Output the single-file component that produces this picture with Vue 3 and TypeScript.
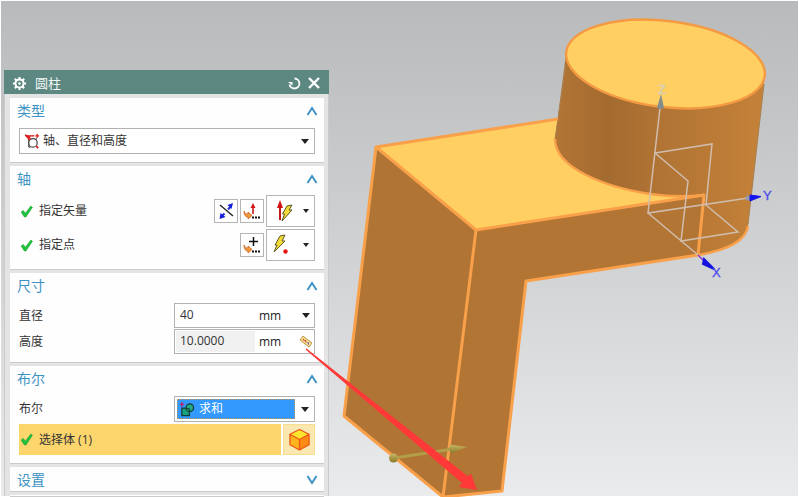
<script setup lang="ts">
import { ref } from 'vue'

const cylinderType = ref('axis')
const diameter = ref('40')
const height = ref('10.0000')
const bool = ref('unite')
</script>

<template>
  <main class="workspace">
    <svg class="scene" viewBox="0 0 799 497" preserveAspectRatio="xMinYMin slice" role="img" aria-label="模型视图">
      <defs>
        <linearGradient id="wall" x1="0" x2="1" y1="0" y2="0">
          <stop offset="0" stop-color="#b27534" />
          <stop offset=".25" stop-color="#a46b30" />
          <stop offset=".45" stop-color="#ae7233" />
          <stop offset="1" stop-color="#c58239" />
        </linearGradient>
        <linearGradient id="gold" x1="0" x2="0" y1="0" y2="1">
          <stop offset="0" stop-color="#c9b965" />
          <stop offset="1" stop-color="#8a7527" />
        </linearGradient>
      </defs>
      <path d="M376 147L476 230L443 497L344 416Z" fill="#b07434" />
      <path d="M476 230L704 195L698 255L526 281L502 491L443 498Z" fill="#b27534" />
      <path d="M376 147L562 119L650 150L704 195L476 230Z" fill="#ffcf62" />
      <path d="M566 54L555 139C555 168 605 187 650 194Q679 198 704 195L698 255C728 250 746 240 748 226L765 74Z" fill="url(#wall)" />
      <ellipse cx="665.5" cy="64" rx="100" ry="43" transform="rotate(6.9 665.5 64)" fill="#ffcf62" stroke="#f49a43" stroke-width="2.4" />
      <path d="M566 65L555 139M764 84L748 224" fill="none" stroke="#a88050" stroke-width="1" />
      <g fill="none" stroke="#f9a04a" stroke-width="3" stroke-linejoin="round">
        <path d="M558 119L376 147L476 230L704 195L698 255" />
        <path d="M376 147L344 416L443 497L476 230M443 497L502 491L526 281L698 255" />
        <path d="M698 255C728 250 746 240 748 226" stroke-width="2.4" />
        <path d="M555 139C555 168 605 187 650 194Q679 198 704 195" stroke-width="2.4" />
      </g>
      <g fill="none" stroke="#d0bdae" stroke-width="1.5">
        <path d="M660 108L648 213L748 198M648 213L698 255M655 153L712 144L706 205L738 232L681 241L688 181L655 153" />
      </g>
      <path d="M661 94L657 108Q660 110 664 108Z" fill="#858c8c" />
      <path d="M698 255L704 261" stroke="#8b3fd0" stroke-width="1.5" />
      <path d="M704 259L714 269L703 264Z" fill="#1414dc" stroke="#1414dc" stroke-width="2" />
      <circle cx="748" cy="198" r="2.5" fill="#99a" />
      <path d="M750 195L761 196.500L750 201Z" fill="#1414f0" stroke="#1414f0" />
      <g class="axis-name">
        <text x="658" y="94" fill="#d8cfb4" stroke="#d8cfb4" stroke-width=".5">Z</text>
        <text x="763" y="200" fill="#4a4af0" stroke="#4a4af0" stroke-width=".3">Y</text>
        <text x="712" y="277" fill="#4a4af0" stroke="#4a4af0" stroke-width=".3">X</text>
      </g>
      <path d="M394 458L453 449" stroke="#b29e48" stroke-width="3" />
      <circle cx="393.500" cy="458" r="4.500" fill="url(#gold)" />
      <path d="M450 444.500L467 447L451 453.500Q448 449 450 444.500Z" fill="url(#gold)" />
    </svg>

    <form class="dialog" @submit.prevent>
      <header class="titlebar">
        <svg class="gear" viewBox="0 0 16 16" aria-hidden="true">
          <circle cx="8" cy="8" r="4.300" fill="none" stroke="#fff" stroke-width="2" />
          <circle cx="8" cy="8" r="1.300" fill="#fff" />
          <path d="M8 1V4M8 12V15M1 8H4M12 8H15M3 3L5 5M11 11L13 13M13 3L11 5M5 11L3 13" stroke="#fff" stroke-width="2.200" />
        </svg>
        <h1>圆柱</h1>
        <button type="button" aria-label="重置">
          <svg viewBox="0 0 14 14"><path d="M7.500 2.500A5 5 0 1 1 2.500 8.500" fill="none" stroke="#fff" stroke-width="1.800" /><path d="M1 6H5.500V9.500Z" fill="#fff" /></svg>
        </button>
        <button type="button" aria-label="关闭">
          <svg viewBox="0 0 14 14"><path d="M2 2L12 12M12 2L2 12" stroke="#fff" stroke-width="2.400" /></svg>
        </button>
      </header>

      <div class="groups">
        <section class="group">
          <button type="button" class="group-head">类型<svg viewBox="0 0 12 10"><path d="M1.500 9L6 2L10.500 9" /></svg></button>
          <div class="combo">
            <svg class="lead" viewBox="0 0 16 16" aria-hidden="true">
              <path d="M1 2H10" stroke="#d22" stroke-width="1.500" fill="none" />
              <path d="M0 1L5 3L4 5ZM13 0V4M11 2H15" fill="#d22" stroke="#d22" stroke-width="1.500" />
              <path d="M4 5V14H6M12 4V6" stroke="#333" fill="none" />
              <circle cx="8.500" cy="9.500" r="4.500" fill="#fff" stroke="#444" stroke-width="1.300" />
              <path d="M3 5H6M12 13L14 15" stroke="#d22" stroke-width="2" />
            </svg>
            <select v-model="cylinderType" aria-label="类型"><option value="axis">轴、直径和高度</option></select>
            <svg class="caret" viewBox="0 0 8 5" aria-hidden="true"><path d="M0 0H8L4 5Z" /></svg>
          </div>
        </section>

        <section class="group axis">
          <button type="button" class="group-head">轴<svg viewBox="0 0 12 10"><path d="M1.500 9L6 2L10.500 9" /></svg></button>
          <div class="pick">
            <svg class="check" viewBox="0 0 12 12" aria-hidden="true"><path d="M1 6.500L3 5L5 7.500L10 1L11.500 2L5.500 11H4Z" /></svg>
            <span class="pick-name">指定矢量</span>
            <button type="button" class="tool" aria-label="反向">
              <svg viewBox="0 0 22 22"><path d="M5 5L18 16" stroke="#222" stroke-width="1.400" /><path d="M6 17L9.500 13.500M13 9.500L16 6" stroke="#2030d8" stroke-width="2" /><path d="M12.500 5L18 3L16.500 9ZM5.500 13L10.500 17L4.500 19Z" fill="#1420d8" /></svg>
            </button>
            <button type="button" class="tool" aria-label="矢量对话框">
              <svg viewBox="0 0 22 22"><path d="M12 14V6" stroke="#d01818" stroke-width="1.600" /><path d="M12 3L14.500 8H9.500Z" fill="#d01818" /><path d="M3 11Q4 15 7 14V12L11 15.500L7 19V17Q3 17 3 11Z" fill="#f69a3c" stroke="#c9601c" stroke-width=".8" /><path d="M11 17.500H19" stroke="#111" stroke-width="2" stroke-dasharray="2 1" /></svg>
            </button>
            <button type="button" class="tool wide" aria-label="自动判断的矢量">
              <svg class="large" viewBox="0 0 24 24"><path d="M8 21V9" stroke="#c01818" stroke-width="2" /><path d="M8 1L11 9H5Z" fill="#d01212" /><path d="M15 7L20 6L17 11L20 11L10 22L12.500 15L10.500 15Z" fill="#f4dc38" stroke="#605820" /></svg>
              <svg class="caret small" viewBox="0 0 6 4"><path d="M0 0H6L3 4Z" /></svg>
            </button>
          </div>
          <div class="pick">
            <svg class="check" viewBox="0 0 12 12" aria-hidden="true"><path d="M1 6.500L3 5L5 7.500L10 1L11.500 2L5.500 11H4Z" /></svg>
            <span class="pick-name">指定点</span>
            <button type="button" class="tool" aria-label="点对话框">
              <svg viewBox="0 0 22 22"><path d="M8 7.500H17M12.500 3V12" stroke="#111" stroke-width="1.500" /><path d="M3 11Q4 15 7 14V12L11 15.500L7 19V17Q3 17 3 11Z" fill="#f69a3c" stroke="#c9601c" stroke-width=".8" /><path d="M11 17.500H19" stroke="#111" stroke-width="2" stroke-dasharray="2 1" /></svg>
            </button>
            <button type="button" class="tool wide" aria-label="自动判断的点">
              <svg class="large" viewBox="0 0 24 24"><path d="M8 3L13 2L10 8L13 8L2 19L5 12L3 12Z" fill="#f4dc38" stroke="#605820" /><circle cx="13.500" cy="18.500" r="2.200" fill="#e61414" /></svg>
              <svg class="caret small" viewBox="0 0 6 4"><path d="M0 0H6L3 4Z" /></svg>
            </button>
          </div>
        </section>

        <section class="group">
          <button type="button" class="group-head">尺寸<svg viewBox="0 0 12 10"><path d="M1.500 9L6 2L10.500 9" /></svg></button>
          <div class="rows">
            <div class="field">
              <label for="diameter">直径</label>
              <div class="value">
                <input id="diameter" v-model="diameter" type="text">
                <span>mm</span>
                <button type="button" aria-label="直径选项"><svg class="caret" viewBox="0 0 8 5"><path d="M0 0H8L4 5Z" /></svg></button>
              </div>
            </div>
            <div class="field">
              <label for="height">高度</label>
              <div class="value">
                <input id="height" v-model="height" class="locked" type="text" readonly>
                <span>mm</span>
                <button type="button" aria-label="测量">
                  <svg class="ruler" viewBox="0 0 14 14"><path d="M4 1L13 8L10 12L1 5Z" fill="#f8dd90" stroke="#c09a48" stroke-linejoin="round" /><path d="M4 4L5.500 6M6.500 5L7 7.500" stroke="#c33" /><path d="M9 7L9.500 9.500" stroke="#44c" /></svg>
                </button>
              </div>
            </div>
          </div>
        </section>

        <section class="group">
          <button type="button" class="group-head">布尔<svg viewBox="0 0 12 10"><path d="M1.500 9L6 2L10.500 9" /></svg></button>
          <div class="field">
            <label for="bool">布尔</label>
            <div class="combo chosen">
              <svg class="lead" viewBox="0 0 16 16" aria-hidden="true"><path d="M2 6.500H10V14.500H2Z" fill="#19a07c" stroke="#123c36" stroke-width="1.300" /><circle cx="10.500" cy="6" r="4" fill="#23a982" stroke="#123c36" stroke-width="1.300" /><path d="M6.500 7H10V10" fill="none" stroke="#123c36" /><path d="M2 0V5M0 2.500H4.500" stroke="#b3246a" stroke-width="1.500" /></svg>
              <select id="bool" v-model="bool"><option value="unite">求和</option></select>
              <svg class="caret" viewBox="0 0 8 5" aria-hidden="true"><path d="M0 0H8L4 5Z" /></svg>
            </div>
          </div>
          <div class="selection">
            <div class="selection-name">
              <svg class="check" viewBox="0 0 12 12" aria-hidden="true"><path d="M1 6.500L3 5L5 7.500L10 1L11.500 2L5.500 11H4Z" /></svg>
              <span>选择体 (1)</span>
            </div>
            <button type="button" aria-label="选择体">
              <svg viewBox="0 0 24 24"><path d="M12 1.500L22 6.500L12 12L2 6.500Z" fill="#ffe52d" /><path d="M2 6.500L12 12V23L2 17.500Z" fill="#ffb31c" /><path d="M22 6.500L12 12V23L22 17.500Z" fill="#ff8a14" /><path d="M12 1.500L22 6.500V17.500L12 23L2 17.500V6.500ZM2 6.500L12 12L22 6.500M12 12V23" fill="none" stroke="#ee5518" stroke-width="1.300" stroke-linejoin="round" /></svg>
            </button>
          </div>
        </section>

        <section class="group closed">
          <button type="button" class="group-head">设置<svg viewBox="0 0 12 10"><path d="M1.500 1L6 8L10.500 1" /></svg></button>
        </section>
        <section class="group rest"></section>
      </div>
    </form>

    <svg class="scene pointer" viewBox="0 0 799 497" preserveAspectRatio="xMinYMin slice" aria-hidden="true">
      <path d="M305.500 349.500L306.500 348.500L467.500 476L471 474L477 490L459 487L462 483Z" fill="#ff3838" />
    </svg>
  </main>
</template>

<style>
body {
  background: #fff;
}
</style>

<style scoped>
* {
  box-sizing: border-box;
}

.workspace {
  display: grid;
  min-height: 100vh;
  border: 1px solid #fff;
  background: linear-gradient(#b8babc, #d4d5d7 58%, #e9ebed);
  background-clip: padding-box;
  font: 12px/16px "Open Sans", "Noto Sans CJK SC", sans-serif;
  color: #333;
}

.scene {
  grid-area: 1 / 1;
  width: 100vw;
  height: 100vh;
  margin: -1px;
}

.pointer {
  z-index: 1;
  pointer-events: none;
}

.axis-name {
  font: 13px "Liberation Sans", sans-serif;
}

.dialog {
  grid-area: 1 / 1;
  display: flex;
  flex-direction: column;
  justify-self: start;
  width: 325px;
  margin: 69px 0 0 3px;
}

button {
  display: flex;
  align-items: center;
  justify-content: center;
  margin: 0;
  padding: 0;
  border: 0;
  background: none;
  font: inherit;
  color: inherit;
}

.titlebar {
  display: flex;
  align-items: center;
  gap: 6px;
  height: 24px;
  padding: 2px 8px 0;
  background: #5d8882;
  color: #f2f7f6;
}

.titlebar h1 {
  flex: 1;
  margin: 0 0 0 2px;
  font-size: 13px;
  font-weight: 400;
  line-height: 20px;
}

.titlebar svg {
  width: 14px;
  height: 14px;
}

.titlebar .gear {
  width: 15px;
  height: 15px;
}

.groups {
  flex: 1;
  display: flex;
  flex-direction: column;
  gap: 4px;
  padding: 4px 4px 0 5px;
  border: solid #c8cacc;
  border-width: 0 1px;
  background: #e4e4e4;
}

.group {
  display: flex;
  flex-direction: column;
  padding: 0 9px 8px;
  background: #fefefe;
  box-shadow: 0 1px #cbcbcb;
}

.group-head {
  justify-content: space-between;
  height: 24px;
  margin: 0 -3px 6px -2px;
  padding-top: 2px;
  font-size: 14px;
  color: #3d92c4;
}

.group-head svg {
  width: 12px;
  height: 10px;
  fill: none;
  stroke: #3d92c4;
  stroke-width: 2;
}

.closed {
  padding-bottom: 0;
}

.closed .group-head {
  margin-bottom: 0;
}

.rest {
  flex: 1;
  padding: 0;
}

.combo {
  display: grid;
  align-items: center;
  height: 26px;
  border: 1px solid #b2b2b2;
  background: #fff;
}

.combo > * {
  grid-area: 1 / 1;
}

.combo select {
  appearance: none;
  width: 100%;
  height: 24px;
  padding: 0 24px 0 23px;
  border: 0;
  background: none;
  font: inherit;
  color: inherit;
}

.lead {
  width: 15px;
  height: 15px;
  margin-left: 5px;
  pointer-events: none;
}

.caret {
  width: 8px;
  height: 5px;
  fill: #222;
}

.small {
  width: 6px;
  height: 4px;
}

.combo .caret {
  justify-self: end;
  margin-right: 5px;
  pointer-events: none;
}

.axis {
  gap: 2px;
}

.axis .group-head {
  margin-bottom: 3px;
}

.pick {
  display: flex;
  align-items: center;
  gap: 2px;
  height: 32px;
}

.check {
  width: 13px;
  height: 13px;
  margin: 0 4px 0 1px;
  fill: #1fc43c;
  stroke: #159a2c;
  stroke-width: .5;
}

.pick-name {
  flex: 1;
}

.tool {
  width: 24px;
  height: 24px;
  border: 1px solid #b5b5b5;
  background: #fff;
}

.tool svg:not(.caret) {
  width: 22px;
  height: 22px;
}

.wide {
  justify-content: space-between;
  width: 49px;
  height: 32px;
  padding: 0 5px;
}

.tool .large:not(.caret) {
  width: 24px;
  height: 24px;
}

.rows {
  display: grid;
  gap: 1px;
}

.field {
  display: flex;
  align-items: center;
}

.field label {
  flex: 1;
}

.value {
  display: flex;
  align-items: center;
  width: 141px;
  height: 25px;
  border: 1px solid #b2b2b2;
  background: #fff;
}

.value input {
  width: 79px;
  height: 21px;
  margin-left: 1px;
  padding: 0 4px 2px;
  border: 0;
  background: none;
  font: inherit;
  color: inherit;
}

.value .locked {
  background: #f1f1f1;
}

.value span {
  flex: 1;
  padding-left: 4px;
  color: #222;
}

.value button {
  width: 16px;
  height: 22px;
}

.ruler {
  width: 14px;
  height: 14px;
}

.field .combo {
  width: 141px;
}

.chosen select {
  width: 118px;
  height: 20px;
  margin-left: 2px;
  padding: 0 0 0 22px;
  background: #3399ff;
  outline: 1px dotted #c79455;
  outline-offset: -1px;
  color: #fff;
}

.chosen .lead {
  z-index: 1;
}

.selection {
  display: flex;
  gap: 2px;
  margin-top: 2px;
}

.selection-name {
  flex: 1;
  display: flex;
  align-items: center;
  gap: 2px;
  height: 31px;
  background: #fcd56c;
}

.selection button {
  width: 32px;
  border: 1px solid #f8dc90;
  background: #fae8b0;
}

.selection button svg {
  width: 23px;
  height: 23px;
}
</style>
